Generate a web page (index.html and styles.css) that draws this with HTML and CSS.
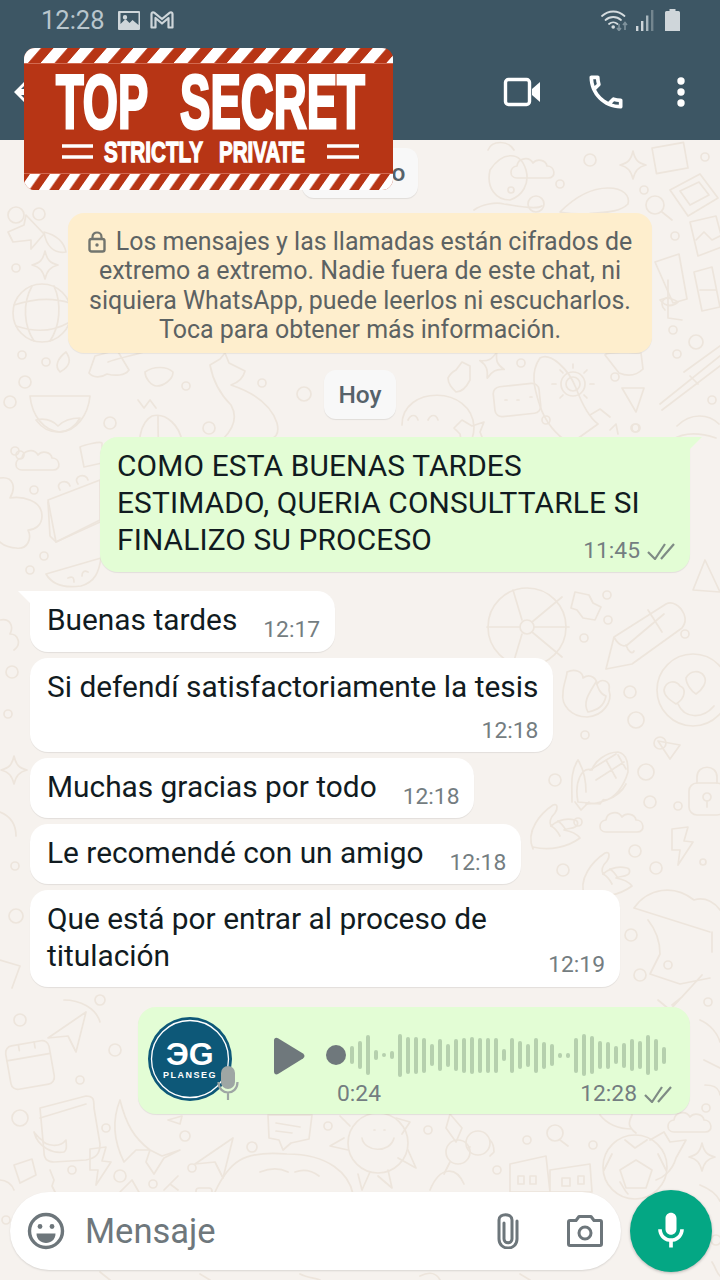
FILE: index.html
```html
<!DOCTYPE html>
<html lang="es">
<head>
<meta charset="utf-8">
<title>WhatsApp</title>
<link rel="stylesheet" href="styles.css">
</head>
<body>
<div class="screen">
  <header class="top">
    <div class="status">
      <span class="status-time">12:28</span>
      <svg class="st-img" viewBox="0 0 22 19"><path fill="#cfd6da" fill-rule="evenodd" d="M1 0h20a1 1 0 0 1 1 1v17a1 1 0 0 1-1 1H1a1 1 0 0 1-1-1V1a1 1 0 0 1 1-1zm1.500 2v11l5-5 4 4 3-3 6 5V2zM7 4a2.200 2.200 0 1 1 0 4.400A2.200 2.200 0 0 1 7 4z"/></svg>
      <svg class="st-m" viewBox="0 0 24 18"><path fill="none" stroke="#cfd6da" stroke-width="2.200" stroke-linejoin="round" d="M1.500 16.500V3c0-1.500 1.500-2.200 2.700-1.300L12 8l7.800-6.300c1.200-.9 2.700-.2 2.700 1.300v13.500h-4V7L12 12.500 5.500 7v9.500z"/></svg>
      <span class="status-fill"></span>
      <svg class="st-wifi" viewBox="0 0 30 22">
        <g fill="none" stroke="#d5dcdf" stroke-width="1.800" stroke-linecap="round"><path d="M2 7c6.500-6 16-6 22.500 0"/><path d="M5.500 11c4.500-4 11-4 15.500 0"/><path d="M9 15c2.500-2.200 6-2.200 8.500 0"/></g>
        <circle cx="13.200" cy="18" r="1.800" fill="#d5dcdf"/>
        <path d="M19 15v6M17 19l2 2.500 2-2.500M25 21v-7M23 16l2-2.500 2 2.500" fill="none" stroke="#7f929c" stroke-width="1.600"/>
      </svg>
      <svg class="st-signal" viewBox="0 0 18 21"><rect x="0" y="16" width="2.400" height="5" fill="#cfd6da"/><rect x="5" y="11" width="2.400" height="10" fill="#cfd6da"/><rect x="10" y="5.500" width="2.400" height="15.500" fill="#a8b6bd"/><rect x="15" y="0" width="2.400" height="21" fill="#73868f"/></svg>
      <svg class="st-batt" viewBox="0 0 15 22"><path fill="#cfd6da" d="M4.500 0h6v2h3a1.500 1.500 0 0 1 1.500 1.500V22H0V3.500A1.500 1.500 0 0 1 1.500 2h3z"/></svg>
    </div>
    <div class="toolbar">
      <svg class="tb-back" viewBox="0 0 12 20"><path fill="#fff" d="M10 0 0 10l10 10 2-2-5-5h5V7H7l5-5z"/></svg>
      <span class="status-fill"></span>
      <svg class="tb-video" viewBox="0 0 38 30"><rect x="2.500" y="2.500" width="24" height="25" rx="3" fill="none" stroke="#fff" stroke-width="3.400"/><path fill="#fff" d="M29 12 37 5v20l-8-7z"/></svg>
      <svg class="tb-phone" viewBox="0 0 24 24"><path fill="#fff" d="M6.540 5c.06.89.21 1.760.45 2.590l-1.200 1.200c-.41-1.200-.67-2.470-.76-3.790h1.510m9.860 12.020c.85.24 1.720.39 2.600.45v1.490c-1.320-.09-2.590-.35-3.800-.75l1.200-1.190M7.500 3H4c-.55 0-1 .45-1 1 0 9.390 7.610 17 17 17 .55 0 1-.45 1-1v-3.490c0-.55-.45-1-1-1-1.240 0-2.450-.2-3.570-.57-.1-.04-.21-.05-.31-.05-.26 0-.51.1-.71.29l-2.200 2.200c-2.830-1.450-5.150-3.760-6.590-6.590l2.200-2.200c.28-.28.36-.67.25-1.020C8.700 6.450 8.500 5.250 8.500 4c0-.55-.45-1-1-1z"/></svg>
      <svg class="tb-dots" viewBox="0 0 10 30"><circle cx="5" cy="4" r="3.700" fill="#fff"/><circle cx="5" cy="15" r="3.700" fill="#fff"/><circle cx="5" cy="26" r="3.700" fill="#fff"/></svg>
    </div>
  </header>

  <main class="main">
    <svg class="doodles" viewBox="0 140 720 1140" aria-hidden="true">
      <defs>
        <g id="plane"><path d="M0 18 38-8 28 32 20 16z"/></g>
        <g id="cloud"><path d="M-20 8c-8 0-8-11 0-12 1-8 12-10 16-3 4-5 13-3 14 3 8 0 10 12 1 12z"/></g>
        <g id="spark"><path d="M0-14C2-5 5-2 13 0 5 2 2 6 0 14-2 6-5 2-13 0-5-2-2-5 0-14z"/></g>
        <g id="bolt"><path d="M-8-16 8-18 4-4 13-3-2 20 0 5-8 5z"/></g>
        <g id="lock"><rect x="-18" y="-10" width="36" height="32" rx="8"/><path d="M-10-10v-6c0-13 20-13 20 0v6"/><circle cy="4" r="4"/><path d="M0 8v6"/></g>
        <g id="hand"><path d="M-22 22C-30 4-14-14-2-22c5-2 5 4 2 8-4 4-6 9-4 13 7-6 16-8 24-6 4 1 3 6 0 7-3 2-8 1-11 3 6 1 12 3 16 8-12 9-30 13-47 9z"/><path d="M-4-1c4 2 7 6 9 10M3-6c3 2 6 6 8 9"/></g>
        <g id="bag"><rect x="-22" y="-22" width="44" height="44" rx="7"/><path d="M-22-8H22M-8-22v6M8-22v6"/></g>
      </defs>
      <g class="dl">
        <!-- upper left -->
        <path d="M8 232l16-7 2-10 18 19-13 15v-9l-18 2z"/>
        <use href="#spark" x="45" y="265"/>
        <circle cx="16" cy="215" r="8"/>
        <circle cx="42" cy="313" r="29"/><path d="M14 305c18-6 38-8 56-2M16 326c18 6 36 6 52-3M32 286c-10 18-8 40 2 55M54 286c8 18 6 40-4 55"/>
        <path d="M44 232c12 3 20 10 22 20-12 2-20-6-22-20z"/>
        <circle cx="39" cy="214" r="6"/><circle cx="16" cy="268" r="4"/>
        <circle cx="22" cy="355" r="4"/><circle cx="46" cy="362" r="4"/><circle cx="25" cy="382" r="6"/><circle cx="10" cy="402" r="6"/>
        <path d="M30 396c6 0 55 0 60 0-2 20-14 35-30 36-16-1-28-16-30-36z"/>
        <path d="M60 372c-6-6-2-14 6-20 5 7 5 14-6 20zM36 420c6 8 12 12 22 12 10 0 18-6 22-14-8 0-16 2-22 8-6-6-14-8-22-6z"/>
        <circle cx="110" cy="423" r="6"/><circle cx="20" cy="455" r="4"/>
        <path d="M95 356l22-6 12 20c-4 6-14 6-22 4-6 4-14 4-18-1z"/>
        <path d="M145 372c8-6 22-6 28 0 0 8-10 14-16 14-6 0-12-8-12-14z"/>
        <path d="M142 460c-6-14-2-38 10-44 14-4 28 10 30 26 0 6 0 14-4 20z"/>
        <path d="M158 416c0 14 0 32 2 46M138 400l6 8 6-8 6 8"/>
        <circle cx="186" cy="386" r="4"/>
        <path d="M210 365l10-6 5-6 4 10 16 8c-2 8-8 12-14 14 12 4 38 14 46 38 2 8 0 14-6 16h-48c8-8 16-20 8-34-10-10-18-24-21-40z"/>
        <circle cx="262" cy="383" r="4"/><circle cx="304" cy="394" r="7"/><circle cx="209" cy="428" r="6"/>
        <path d="M150 350c-10 4-32 8-42 12"/>
        <!-- band near notice -->
        <path d="M490 170c12-18 30-20 36 0 4 14-4 26-16 30-14 0-24-12-20-30zM474 210c8-6 22-8 30-6 14 2 32 6 38 2"/>
        <path d="M488 150c4-10 20-10 26 0"/>
        <use href="#cloud" x="537" y="170"/>
        <use href="#spark" x="633" y="165"/>
        <circle cx="590" cy="160" r="6"/><circle cx="560" cy="184" r="4"/><circle cx="511" cy="190" r="3"/>
        <circle cx="536" cy="204" r="8"/><circle cx="644" cy="190" r="4"/><circle cx="705" cy="157" r="4"/>
        <path d="M560 212c14-14 30-24 48-24 16 0 22 8 20 16-10 10-30 8-40 10-10 0-20 0-28-2z"/>
        <rect x="654" y="145" width="32" height="26" transform="rotate(-10 670 158)"/>
        <path d="M670 190l30-16 18 24-30 18z"/><path d="M680 191l19-9 10 13-19 10z"/>
        <circle cx="655" cy="205" r="9"/><path d="M662 212l10 8"/>
        <path d="M690 222l26-6 8 30-26 10z"/><path d="M696 240l8-8 8 8 8-4"/>
        <circle cx="675" cy="236" r="4"/>
        <path d="M655 262l24-8 8 45-14 4zM665 310c-6-6-2-14 6-12"/>
        <path d="M694 272l18-5 8 40-18 4zM700 290h16M668 280v38l14 2"/>
        <path d="M660 300c6-3 12-2 18 2-6 5-12 5-18-2z"/>
        <circle cx="673" cy="330" r="4"/><circle cx="696" cy="342" r="7"/><circle cx="677" cy="354" r="4"/>
        <path d="M605 355c2-4 20-2 36-2l2 16c-6 6-14 8-24 4z"/>
        <path d="M684 372l36-26M660 404l60-48M662 410l58-44M690 376l8 8"/>
        <path d="M540 358c10-6 28 10 36 30 6 16 14 30 22 36l-28 20c-12-8-24-20-30-38-6-18-10-34 0-48z"/>
        <circle cx="573" cy="384" r="7"/><circle cx="573" cy="384" r="12"/><path d="M573 364v4M556 384h-4M590 384h4M560 370l3 3M587 370l-3 3M560 398l3-3M587 398l-3-3"/>
        <path d="M590 415l10-6 10 8"/>
        <path d="M622 388l22 0-8 24z"/><circle cx="615" cy="377" r="4"/><circle cx="712" cy="400" r="4"/>
        <path d="M677 426c14-14 32-12 42-2M672 440c12-8 26-8 44-2"/><circle cx="635" cy="428" r="4"/>
        <use href="#spark" x="492" y="365" transform="rotate(20 492 365)"/><circle cx="521" cy="363" r="4"/>
        <path d="M456 370l6-8 8 4v14c-4 8-8 12-14 12-4-4-8-8-8-14 2-4 4-6 8-8z"/>
        <path d="M402 425c0-40 70-40 72 2 0 6-2 12-2 12M408 420c3-6 8-6 10 0M428 420c3-6 8-6 10 0"/>
        <rect x="494" y="385" width="46" height="30" rx="7" transform="rotate(-6 517 400)"/><path d="M505 400h2M517 400h2M530 397h2"/>
        <path d="M462 420l10 6 12-4-4 10 4 10-12-2-10 6-2-12-6-6z"/>
        <circle cx="546" cy="420" r="4"/><path d="M610 430l6-6 2 10"/>
        <circle cx="636" cy="428" r="4"/>
        <!-- left of bubbles -->
        <use href="#cloud" x="42" y="462"/>
        <circle cx="15" cy="451" r="4"/><circle cx="34" cy="490" r="4"/><circle cx="44" cy="556" r="4"/><circle cx="30" cy="570" r="4"/>
        <path d="M0 478c14-2 16 10 10 20 12-2 32 2 32 18 0 10-8 14-14 14 4 8 0 20-12 18-4 0-12-2-16-6"/>
        <path d="M48 500l52-20v40l-44 22z"/><path d="M48 502l2 34 6 6 44-20M78 484c-6-8 8-12 10-4M60 490c-6-8 8-12 10-4"/>
        <path d="M80 447c4-2 20-6 22-4v20l-18 4z"/>
        <path d="M46 574l55-16c-2 14-6 24-20 28-14 2-28 0-35-12z"/><path d="M68 578c4-2 6-1 6 4M88 572c-4-2-6 0-6 4"/>
        <!-- right side -->
        <circle cx="527" cy="627" r="39"/><circle cx="527" cy="627" r="7"/><path d="M534 627h35M520 627h-33M522 620l-9-30M532 622l30-25M532 632l30 25M522 634l-9 30"/>
        <path d="M575 592l14 3 4 8 8 4-6 13-12-2-6-8-6-2z"/>
        <path d="M606 669l8-32 52-33c6-3 14 1 18 10 2 5 2 9-2 14l-50 36zM614 637c4 8 10 10 12 8 2 6 6 10 8 6M648 610l14 22M626 646l38-32"/>
        <circle cx="584" cy="638" r="4"/><circle cx="607" cy="595" r="4"/><circle cx="608" cy="620" r="4"/><circle cx="685" cy="634" r="4"/>
        <path d="M693 590l12-30 15 32z"/>
        <path d="M567 672c8-4 16 0 16 6 8-6 14 2 14 6 4-6 14-4 12 6 4 12-6 26-22 27-16 0-26-12-24-24 0-8 4-16 4-21z"/>
        <path d="M588 712c-6-10 2-20 8-30 2 6 4 12 10 14-2 10-8 14-18 16z"/>
        <circle cx="693" cy="690" r="36"/><path d="M664 690c2-10 12-10 16-4 6 2 6 12-4 18-6-4-12-8-12-14zM686 678c4-8 14-8 18-2 4 6-2 14-8 18-4-2-10-10-10-16zM678 704c6 14 24 16 36 2"/>
        <circle cx="630" cy="692" r="6"/><circle cx="636" cy="720" r="8"/><circle cx="585" cy="735" r="4"/>
        <circle cx="660" cy="743" r="6"/><circle cx="646" cy="772" r="8"/><circle cx="650" cy="802" r="6"/><circle cx="678" cy="806" r="4"/>
        <path d="M658 741l22 4-10 14z"/>
        <path d="M578 802c-4-20 4-36 14-32 2-8 14-18 26-18 10 2 10 14 10 20-4 14-14 28-24 28 0-2-4 4-4 4zM572 802c0-18-2-30 6-42 6 10 8 22 8 32M586 804c10 0 32-4 40-20"/>
        <path d="M590 770l26-16M596 780l28-18M606 760l10 18M618 755l8 14"/>
        <path d="M575 802l6 8 8-8"/>
        <use href="#lock" x="707" y="793"/>
        <use href="#hand" x="555" y="827"/>
        <use href="#hand" x="607" y="875"/>
        <circle cx="555" cy="780" r="6"/><circle cx="578" cy="822" r="4"/>
        <use href="#cloud" x="626" y="824"/>
        <use href="#bolt" x="680" y="845"/>
        <circle cx="635" cy="851" r="6"/><circle cx="656" cy="868" r="6"/><circle cx="703" cy="862" r="3"/><circle cx="563" cy="870" r="6"/>
        <path d="M634 908c14-20 40-24 60-8 12-4 22 4 26 10M634 908l76 24M712 932v20M648 920c8 10 12 22 12 34l-10 20 30 10 30-6"/>
        <circle cx="631" cy="935" r="6"/><circle cx="640" cy="975" r="6"/><circle cx="668" cy="965" r="4"/>
        <path d="M658 1000l12 10 20-22M672 1005l10-8 20-22"/>
        <circle cx="708" cy="1002" r="4"/>
        <!-- left lower -->
        <path d="M0 620c10-2 14 6 10 14 8 0 12 10 4 16"/>
        <circle cx="12" cy="672" r="6"/><circle cx="8" cy="714" r="4"/>
        <use href="#spark" x="14" y="770"/>
        <path d="M0 812c10 4 16 12 16 24"/><circle cx="15" cy="866" r="4"/><circle cx="16" cy="916" r="7"/>
        <path d="M0 960l20 6-8 22"/>
        <use href="#plane" x="48" y="1020"/>
        <circle cx="20" cy="1020" r="6"/>
        <use href="#bag" x="30" y="1065" transform="rotate(-10 30 1065)"/>
        <circle cx="100" cy="1000" r="5"/><circle cx="115" cy="1050" r="6"/><circle cx="80" cy="1080" r="4"/>
        <path d="M64 1000c16 0 32 8 36 22"/>
        <path d="M700 1020c10 4 18 14 20 22M704 1060l16 8M705 1085c8 0 14 2 15 10"/><circle cx="706" cy="1108" r="4"/>
        <!-- bottom band -->
        <path d="M40 1108l46-12c8 0 8 4 8 12l6 36c0 10-4 14-14 16l-32 2c-6 0-10-2-10-10z"/><path d="M40 1118l46-14"/>
        <circle cx="20" cy="1118" r="8"/>
        <path d="M34 1132c4 16 20 22 30 20 4-2 2-8 2-12-6 8-20 6-24 0-4-2-6-6-8-8z"/>
        <circle cx="106" cy="1128" r="4"/>
        <path d="M120 1100c6 24 14 38 30 50l-14 0-12 12c-10-20-12-42-4-62zM150 1150l12 6 18-6-16 8-10 16-8-12zM168 1120l14-4-2 8z"/>
        <use href="#plane" transform="translate(195 1146)"/>
        <circle cx="185" cy="1136" r="5"/><circle cx="252" cy="1147" r="5"/>
        <use href="#bolt" x="98" y="1165"/>
        <path d="M14 1165l18-6 4 16-16 8z"/><circle cx="72" cy="1170" r="4"/><path d="M50 1170l4 10-2 6 4 8"/><circle cx="120" cy="1176" r="6"/><circle cx="192" cy="1168" r="4"/><circle cx="153" cy="1184" r="4"/>
        <path d="M268 1115h44l-3 24-18 4-8 7-4-10-10-2zM276 1123l24 4M276 1131l16 2"/>
        <circle cx="328" cy="1126" r="4"/>
        <circle cx="378" cy="1143" r="30"/><path d="M362 1138c2 14 28 16 32 0M374 1130h1M384 1130h1"/>
        <path d="M350 1126l-10-10M396 1118l14 4-8 12M408 1150l8 18-18-10M388 1170l4 18-14-12M370 1172l-8 18-4-16M348 1150l-18-4 14-8"/>
        <circle cx="458" cy="1152" r="12"/><circle cx="478" cy="1143" r="12"/><path d="M468 1148l2-1M490 1140c4 4 4 8 4 12l-4 4M450 1162l-6 12"/>
        <path d="M450 1114l12 14-6 14-10-14z"/>
        <circle cx="428" cy="1130" r="4"/><circle cx="497" cy="1170" r="4"/>
        <circle cx="555" cy="1133" r="8"/><path d="M560 1140l8 6"/><circle cx="527" cy="1140" r="4"/>
        <circle cx="593" cy="1145" r="4"/>
        <path d="M600 1115c8 10 20 14 32 14M632 1115c-4 8-4 12 4 18"/>
        <use href="#cloud" x="694" y="1124"/>
        <path d="M510 1164l36-8 4 36h-40zM550 1170l40-6 2 28h-42z"/><path d="M518 1176h6v8h-6zM530 1176h6v8h-6zM562 1178h8v8h-8zM578 1176h6v8h-6z"/>
        <path d="M430 1190c10-24 26-24 34-6"/>
        <circle cx="635" cy="1167" r="32"/><path d="M625 1140l10 8 12-8M620 1170l16-10 16 10-6 18h-20zM604 1170l8-16M666 1170l-8-16"/>
        <path d="M650 1140l14-8 6 10 16-2-10 18c-4 14-14 20-20 22"/>
        <use href="#spark" x="702" y="1157"/>
        <path d="M215 1192c14-30 28-42 72-38 42 0 62 20 66 40M260 1172c10-4 20-4 28 0M295 1172c8-3 16-2 24 4"/>
        <path d="M164 1190l14-14M178 1190l-8-6"/><path d="M120 1192l12-12 8 14"/>
        <rect x="196" y="1188" width="16" height="8" rx="3"/>
        <!-- lower band, sides of composer -->
        <circle cx="6" cy="1220" r="4"/><path d="M0 1180c6 0 12 4 14 10"/>
        <path d="M620 1182c4 6 4 8 8 12"/><path d="M700 1185c10 4 16 8 20 16"/>
        <circle cx="716" cy="1240" r="5"/><path d="M712 1262c4 6 4 10 8 14"/>
        <path d="M100 1272l10 8M200 1274l10 6M300 1274c8 4 16 4 20 6M420 1276c8-4 16-4 20 4M520 1274l10 6"/>
      </g>
    </svg>

    <section class="chat">
      <div class="pill pill-first">Domingo</div>
      <div class="notice">
        <svg class="notice-lock" viewBox="0 0 18 22"><rect x="1.500" y="8" width="15" height="12.500" rx="2" fill="none" stroke="#72756f" stroke-width="2.400"/><path d="M4.500 8V6c0-6 9-6 9 0v2" fill="none" stroke="#72756f" stroke-width="2.200"/><circle cx="9" cy="14" r="1.700" fill="#72756f"/></svg> Los mensajes y las llamadas están cifrados de<br>extremo a extremo. Nadie fuera de este chat, ni<br>siquiera WhatsApp, puede leerlos ni escucharlos.<br>Toca para obtener más información.
      </div>
      <div class="pill pill-today">Hoy</div>

      <div class="bubble out wide tail-out">
        <p class="text text-upper">COMO ESTA BUENAS TARDES<br>ESTIMADO, QUERIA CONSULTTARLE SI<br>FINALIZO SU PROCESO</p>
        <div class="meta meta-out"><span class="time">11:45</span><svg class="ticks" viewBox="0 0 28 18"><path d="M1 10l7 7L18 2M14 17 27 2" fill="none" stroke="#7f8b85" stroke-width="2.200"/></svg></div>
      </div>

      <div class="bubble in row tail-in first-in">
        <p class="text">Buenas tardes</p><span class="time">12:17</span>
      </div>
      <div class="bubble in">
        <p class="text">Si defendí satisfactoriamente la tesis</p>
        <div class="meta meta-under"><span class="time">12:18</span></div>
      </div>
      <div class="bubble in row">
        <p class="text">Muchas gracias por todo</p><span class="time">12:18</span>
      </div>
      <div class="bubble in row">
        <p class="text">Le recomendé con un amigo</p><span class="time">12:18</span>
      </div>
      <div class="bubble in wide">
        <p class="text">Que está por entrar al proceso de<br>titulación</p>
        <div class="meta meta-in"><span class="time">12:19</span></div>
      </div>

      <div class="bubble out audio">
        <div class="avatar">
          <svg class="avatar-logo" viewBox="0 0 84 84">
            <circle cx="42" cy="42" r="42" fill="#0d5878"/>
            <circle cx="42" cy="42" r="38.500" fill="none" stroke="#fff" stroke-width="1.300"/>
            <text x="18" y="48" class="logo-mark">ЭG</text>
            <text x="15" y="61" class="logo-name">PLANSEG</text>
          </svg>
          <svg class="avatar-mic" viewBox="0 0 22 36"><rect x="4" y="1" width="14" height="23" rx="7" fill="#9ea6a4"/><path d="M1.500 17c0 14 19 14 19 0M11 27v8" fill="none" stroke="#9ea6a4" stroke-width="2.200"/></svg>
        </div>
        <svg class="play" viewBox="0 0 34 38"><path d="M2 3.500C2 1 4 0 6 1.200L31 16.500c2 1.300 2 3.700 0 5L6 37C4 38 2 37 2 34.500z" fill="#6f787c"/></svg>
        <div class="voice">
          <div class="wave">
            <span class="wave-dot"></span>
            <span class="bar" style="height:18px"></span><span class="bar" style="height:28px"></span><span class="bar" style="height:40px"></span><span class="bar" style="height:10px"></span><span class="bar" style="height:4px"></span><span class="bar" style="height:8px"></span><span class="bar" style="height:43px"></span><span class="bar" style="height:37px"></span><span class="bar" style="height:37px"></span><span class="bar" style="height:35px"></span><span class="bar" style="height:22px"></span><span class="bar" style="height:32px"></span><span class="bar" style="height:23px"></span><span class="bar" style="height:32px"></span><span class="bar" style="height:35px"></span><span class="bar" style="height:37px"></span><span class="bar" style="height:35px"></span><span class="bar" style="height:35px"></span><span class="bar" style="height:35px"></span><span class="bar" style="height:12px"></span><span class="bar" style="height:35px"></span><span class="bar" style="height:28px"></span><span class="bar" style="height:23px"></span><span class="bar" style="height:35px"></span><span class="bar" style="height:27px"></span><span class="bar" style="height:22px"></span><span class="bar" style="height:5px"></span><span class="bar" style="height:5px"></span><span class="bar" style="height:35px"></span><span class="bar" style="height:42px"></span><span class="bar" style="height:38px"></span><span class="bar" style="height:28px"></span><span class="bar" style="height:27px"></span><span class="bar" style="height:18px"></span><span class="bar" style="height:25px"></span><span class="bar" style="height:32px"></span><span class="bar" style="height:28px"></span><span class="bar" style="height:40px"></span><span class="bar" style="height:32px"></span><span class="bar" style="height:17px"></span>
          </div>
          <div class="voice-meta">
            <span class="time">0:24</span>
            <span class="status-fill"></span>
            <span class="time">12:28</span>
            <svg class="ticks" viewBox="0 0 28 18"><path d="M1 10l7 7L18 2M14 17 27 2" fill="none" stroke="#7f8b85" stroke-width="2.200"/></svg>
          </div>
        </div>
      </div>
    </section>

    <footer class="composer">
      <div class="input">
        <svg class="ic-emoji" viewBox="0 0 38 38"><circle cx="19" cy="19" r="16.500" fill="none" stroke="#6d767b" stroke-width="3.400"/><circle cx="13" cy="14.500" r="2.400" fill="#6d767b"/><circle cx="25" cy="14.500" r="2.400" fill="#6d767b"/><path d="M9.500 21.500h19c0 6-4.500 9.500-9.500 9.500s-9.500-3.500-9.500-9.500z" fill="#6d767b"/></svg>
        <span class="placeholder">Mensaje</span>
        <span class="status-fill"></span>
        <svg class="ic-clip" viewBox="0 0 24 36"><path d="M8 10v16c0 5 8 5 8 0V7c0-7-13-7-13 0v19c0 12 18 12 18 0V8" fill="none" stroke="#6d767b" stroke-width="3" stroke-linecap="round"/></svg>
        <svg class="ic-cam" viewBox="0 0 36 32"><path d="M12 1.500h12l3 4h6c1 0 1.500.5 1.500 1.500v22c0 1-.5 1.500-1.500 1.500H3c-1 0-1.500-.5-1.500-1.500V7c0-1 .5-1.500 1.500-1.500h6z" fill="none" stroke="#6d767b" stroke-width="3" stroke-linejoin="round"/><circle cx="18" cy="18" r="6" fill="none" stroke="#6d767b" stroke-width="3"/></svg>
      </div>
      <div class="mic-btn">
        <svg class="ic-mic" viewBox="0 0 24 24"><path fill="#fff" d="M12 14c1.660 0 3-1.340 3-3V5c0-1.660-1.340-3-3-3S9 3.340 9 5v6c0 1.660 1.340 3 3 3zm5-3c0 2.760-2.240 5-5 5s-5-2.240-5-5H5c0 3.530 2.610 6.430 6 6.920V21h2v-3.080c3.390-.49 6-3.390 6-6.920h-2z"/></svg>
      </div>
    </footer>
  </main>

  <svg class="banner" viewBox="0 0 369 142">
    <defs>
      <pattern id="stripe-top" width="26.600" height="15" patternUnits="userSpaceOnUse" patternTransform="translate(3 0) skewX(-41)"><rect width="26.600" height="15" fill="#b73515"/><rect x="0" width="14" height="15" fill="#fff"/></pattern>
      <pattern id="stripe-bot" width="20" height="16" patternUnits="userSpaceOnUse" patternTransform="translate(6 126) skewX(-35)"><rect width="20" height="16" fill="#b73515"/><rect x="0" width="10.500" height="16" fill="#fff"/></pattern>
      <clipPath id="banner-clip"><rect width="369" height="142" rx="11"/></clipPath>
    </defs>
    <g clip-path="url(#banner-clip)">
      <rect width="369" height="142" fill="#b73515"/>
      <rect width="369" height="15" fill="url(#stripe-top)"/>
      <rect y="126" width="369" height="16" fill="url(#stripe-bot)"/>
      <path d="M0 15.500h369M0 125.500h369" stroke="#d26a50" stroke-width="1"/>
      <path d="M38 98h31M38 109h31M303 98h32M303 109h32" stroke="#fff" stroke-width="3.400"/>
    </g>
    <g class="banner-text">
      <text transform="translate(32 80) scale(.596 1)" class="bt-big">TOP</text>
      <text transform="translate(156 80) scale(.6 1)" class="bt-big">SECRET</text>
      <text transform="translate(80 114) scale(.688 1)" class="bt-small">STRICTLY</text>
      <text transform="translate(195 114) scale(.685 1)" class="bt-small">PRIVATE</text>
    </g>
  </svg>
</div>
</body>
</html>
```

FILE: styles.css
```css
* { box-sizing: border-box; }
html, body { margin: 0; padding: 0; }
body { font-family: Roboto, "Noto Sans", sans-serif; background: #f6f2ee; }

.screen {
  position: relative;
  width: 720px;
  height: 1280px;
  overflow: hidden;
  display: flex;
  flex-direction: column;
}

/* header */
.top { background: #3d5664; height: 140px; flex: none; }
.status {
  height: 40px;
  display: flex;
  align-items: center;
  padding: 0 40px 0 41px;
}
.status-time { font-size: 25.500px; color: #b9c6cd; }
.status-fill { flex: 1; }
.st-img { width: 22px; height: 19px; margin-left: 13px; }
.st-m { width: 24px; height: 18px; margin-left: 10px; }
.st-wifi { width: 30px; height: 22px; }
.st-signal { width: 18px; height: 21px; margin-left: 6px; }
.st-batt { width: 15px; height: 22px; margin-left: 11px; }

.toolbar {
  height: 100px;
  display: flex;
  align-items: center;
  padding: 4px 34px 0 14px;
}
.tb-back { width: 12px; height: 20px; }
.tb-video { width: 38px; height: 30px; }
.tb-phone { width: 44px; height: 44px; margin-left: 43px; }
.tb-dots { width: 10px; height: 30px; margin-left: 48px; }

/* banner sticker */
.banner { position: absolute; left: 24px; top: 48px; width: 369px; height: 142px; }
.banner-text text { fill: #fff; stroke: #fff; font-family: "Liberation Sans", sans-serif; font-weight: 700; }
.bt-big { font-size: 76px; stroke-width: 3px; }
.bt-small { font-size: 30px; stroke-width: 1.400px; }

/* chat */
.main {
  position: relative;
  flex: 1;
  min-height: 0;
  display: flex;
  flex-direction: column;
  background: #f6f2ee;
}
.doodles { position: absolute; left: 0; top: 0; width: 720px; height: 1140px; }
.dl { fill: none; stroke: #ede5dc; stroke-width: 1.700; stroke-linejoin: round; stroke-linecap: round; }

.chat {
  position: relative;
  flex: 1;
  min-height: 0;
  display: flex;
  flex-direction: column;
  padding: 8px 30px 0;
}

.pill {
  align-self: center;
  background: #f8f8f8;
  color: #56626a;
  border-radius: 12px;
  font-size: 24.500px;
  font-weight: 500;
  text-align: center;
  box-shadow: 0 1px 1px rgba(0, 0, 0, .09);
}
.pill-first { width: 116px; height: 50px; line-height: 50px; padding-right: 8px; }
.pill-today { width: 72px; height: 49px; line-height: 49px; margin-top: 17px; }

.notice {
  align-self: center;
  width: 584px;
  height: 140px;
  margin-top: 15px;
  padding-top: 14px;
  background: #feeecd;
  border-radius: 16px;
  color: #5c6263;
  font-size: 24.950px;
  line-height: 29.300px;
  text-align: center;
  box-shadow: 0 1px 1px rgba(0, 0, 0, .06);
}
.notice-lock { width: 18px; height: 22px; vertical-align: -3px; margin-right: 4px; }

.bubble {
  position: relative;
  border-radius: 18px;
  padding: 10px 15px 8px 17px;
  box-shadow: 0 1px 1px rgba(0, 0, 0, .08);
}
.bubble.in { align-self: flex-start; background: #fff; margin-top: 6px; }
.bubble.out { align-self: flex-end; background: #e3fdd5; }
.bubble.wide { width: 590px; }
.out.wide { margin-top: 18px; }
.in.wide { padding-bottom: 9px; }
.row { display: flex; align-items: flex-end; gap: 26px; }
.row .text { margin-bottom: 5px; }
.first-in.bubble { margin-top: 19px; padding-bottom: 9px; }

.tail-in { border-top-left-radius: 0; }
.tail-in::before {
  content: "";
  position: absolute;
  left: -12px;
  top: 0;
  width: 13px;
  height: 13px;
  background: #fff;
  clip-path: polygon(0 0, 100% 0, 100% 100%);
}
.tail-out { border-top-right-radius: 0; }
.tail-out::after {
  content: "";
  position: absolute;
  right: -12px;
  top: 0;
  width: 13px;
  height: 13px;
  background: #e3fdd5;
  clip-path: polygon(0 0, 100% 0, 0 100%);
}

.text {
  margin: 0;
  font-size: 29.850px;
  line-height: 37px;
  color: #111b21;
}
.text-upper { letter-spacing: .15px; }
.time { font-size: 22.800px; line-height: 26px; color: #747d81; white-space: nowrap; }

.meta { display: flex; justify-content: flex-end; align-items: center; }
.meta-out { margin-top: -20px; }
.meta-in { margin-top: -22px; }
.meta-under { margin-top: 13px; }
.ticks { width: 28px; height: 18px; margin-left: 7px; flex: none; }

/* voice note */
.audio {
  width: 552px;
  height: 107px;
  margin-top: 20px;
  display: flex;
  align-items: flex-start;
  padding: 10px 18px 0 10px;
}
.avatar { position: relative; width: 84px; height: 84px; flex: none; }
.avatar-logo { display: block; width: 84px; height: 84px; }
.logo-mark { font-family: "Liberation Sans", sans-serif; font-weight: 700; font-size: 32px; fill: #fff; }
.logo-name { font-family: "Liberation Sans", sans-serif; font-weight: 700; font-size: 9px; letter-spacing: 1.500px; fill: #fff; }
.avatar-mic { position: absolute; left: 69px; top: 48px; width: 22px; height: 36px; }
.play { width: 34px; height: 38px; flex: none; margin: 20px 0 0 40px; }
.voice { flex: 1; margin-left: 20px; margin-top: 13px; }
.wave { display: flex; align-items: center; gap: 4px; height: 50px; }
.wave-dot { width: 20px; height: 20px; border-radius: 50%; background: #6f787c; flex: none; }
.bar { width: 4px; flex: none; background: #b6d0ae; border-radius: 2px; }
.voice-meta { display: flex; align-items: center; height: 26px; margin-top: 1px; padding-left: 11px; }

/* composer */
.composer {
  position: relative;
  flex: none;
  height: 90px;
  padding: 0 8px 8px 10px;
  display: flex;
  align-items: center;
}
.input {
  flex: 1;
  height: 78px;
  background: #fff;
  border-radius: 39px;
  display: flex;
  align-items: center;
  padding: 0 18px 0 17px;
  box-shadow: 0 1px 2px rgba(0, 0, 0, .12);
}
.ic-emoji { width: 38px; height: 38px; flex: none; }
.placeholder { font-size: 34.500px; color: #6e777c; margin-left: 20px; }
.ic-clip { width: 24px; height: 36px; flex: none; }
.ic-cam { width: 36px; height: 32px; flex: none; margin-left: 47px; }
.mic-btn {
  width: 82px;
  height: 82px;
  margin-left: 9px;
  border-radius: 50%;
  background: #04a784;
  display: flex;
  align-items: center;
  justify-content: center;
  box-shadow: 0 1px 3px rgba(0, 0, 0, .25);
}
.ic-mic { width: 44px; height: 44px; }
```
